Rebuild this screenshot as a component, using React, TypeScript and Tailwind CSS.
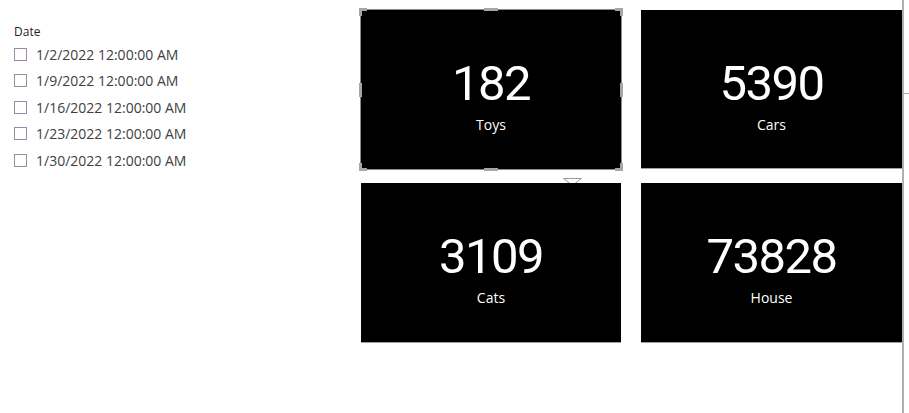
const DATES = [
  '1/2/2022 12:00:00 AM',
  '1/9/2022 12:00:00 AM',
  '1/16/2022 12:00:00 AM',
  '1/23/2022 12:00:00 AM',
  '1/30/2022 12:00:00 AM',
]

const CARDS = [
  { value: '182', label: 'Toys', selected: true },
  { value: '5390', label: 'Cars' },
  { value: '3109', label: 'Cats' },
  { value: '73828', label: 'House' },
]

const uiFont = "font-['Segoe_UI','Open_Sans',sans-serif]"

function Slicer() {
  return (
    <div className={`w-[361px] shrink-0 pl-[14px] pt-[24px] ${uiFont}`}>
      <div className="text-[12px] leading-[16px] text-[#252423]">Date</div>
      <ul className="mt-[1px]">
        {DATES.map((d) => (
          <li key={d} className="flex h-[26.5px] items-center gap-[9px]">
            <span className="h-[13px] w-[13px] border border-[#9d8aa8] bg-white" />
            <span className="text-[14px] text-[#404040]">{d}</span>
          </li>
        ))}
      </ul>
    </div>
  )
}

function Handles() {
  return (
    <>
      <div className="pointer-events-none absolute -inset-px border border-[#8a8a8a]" />
      {/* corner grips */}
      <div className="absolute -left-[2px] -top-[2px] h-[8px] w-[8px] border-l-[3px] border-t-[3px] border-[#a6a6a6]" />
      <div className="absolute -right-[2px] -top-[2px] h-[8px] w-[8px] border-r-[3px] border-t-[3px] border-[#a6a6a6]" />
      <div className="absolute -bottom-[2px] -left-[2px] h-[8px] w-[8px] border-b-[3px] border-l-[3px] border-[#a6a6a6]" />
      <div className="absolute -bottom-[2px] -right-[2px] h-[8px] w-[8px] border-b-[3px] border-r-[3px] border-[#a6a6a6]" />
      {/* edge grips */}
      <div className="absolute -top-[2px] left-1/2 h-[3px] w-[14px] -translate-x-1/2 bg-[#a6a6a6]" />
      <div className="absolute -bottom-[2px] left-1/2 h-[3px] w-[14px] -translate-x-1/2 bg-[#a6a6a6]" />
      <div className="absolute -left-[2px] top-1/2 h-[14px] w-[3px] -translate-y-1/2 bg-[#a6a6a6]" />
      <div className="absolute -right-[2px] top-1/2 h-[14px] w-[3px] -translate-y-1/2 bg-[#a6a6a6]" />
      {/* visual menu caret */}
      <svg className="absolute right-[39px] top-[168px]" width="19" height="8" viewBox="0 0 19 8">
        <path d="M0.5 0.5 H18.5 L9.5 7.5 Z" fill="#fff" stroke="#9a9a9a" />
      </svg>
    </>
  )
}

function Card({ value, label, selected }: { value: string; label: string; selected?: boolean }) {
  return (
    <div
      className={`relative flex flex-col items-center bg-black ${
        selected ? '' : 'border-b border-[#a0a0a0]'
      }`}
    >
      <div className="mt-[45px] font-['Roboto',sans-serif] text-[49px] leading-[58px] tracking-[-1.5px] text-white">
        {value}
      </div>
      <div className={`mt-[3px] text-[14px] leading-[18px] text-white ${uiFont}`}>{label}</div>
      {selected && <Handles />}
    </div>
  )
}

export default function App() {
  return (
    <div className="flex h-[413px] w-[909px] bg-white">
      <div className="flex w-[902px] shrink-0">
        <Slicer />
        <div className="mt-[10px] grid h-[333px] grid-cols-[260px_261px] grid-rows-[159px_160px] gap-x-[20px] gap-y-[14px]">
          {CARDS.map((c) => (
            <Card key={c.label} {...c} />
          ))}
        </div>
      </div>
      <div className="relative w-[7px] border-l-2 border-[#b0b0b0]">
        <div className="absolute left-0 top-[93px] h-px w-[6px] bg-[#b0b0b0]" />
      </div>
    </div>
  )
}
